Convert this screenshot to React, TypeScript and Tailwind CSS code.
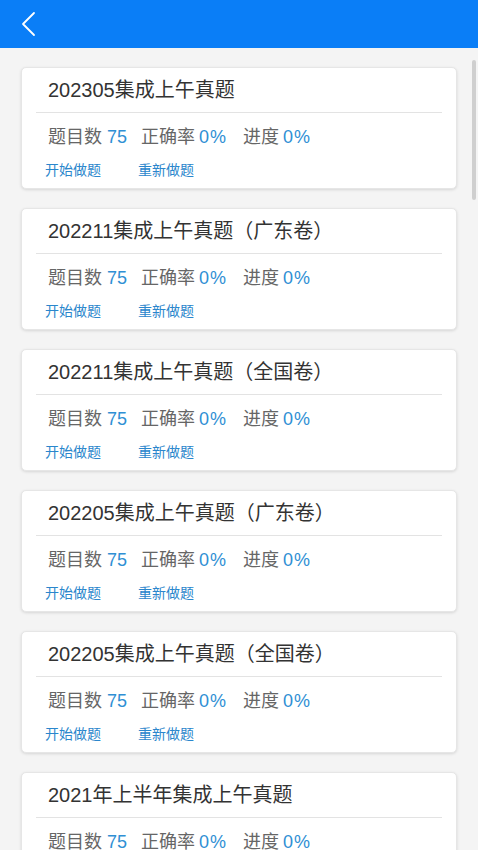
import React from "react";

const papers = [
  "202305集成上午真题",
  "202211集成上午真题（广东卷）",
  "202211集成上午真题（全国卷）",
  "202205集成上午真题（广东卷）",
  "202205集成上午真题（全国卷）",
  "2021年上半年集成上午真题",
];

function PaperCard({ title }: { title: string }) {
  return (
    <div className="bg-white rounded-[5px] border border-[#e6e6e6] shadow-[0_1px_3px_rgba(0,0,0,0.12)] pt-[10px] pb-[9px]">
      <div className="px-[26px] text-[20px] leading-[24px] text-[#333333]">{title}</div>
      <div className="mx-[14px] mt-[10px] h-px bg-[#e3e3e3]" />
      <div className="mt-[12px] px-[26px] flex items-center text-[18px] leading-[24px]">
        <span className="text-[#666666]">题目数</span>
        <span className="ml-[5px] text-[#2f8fd4]">75</span>
        <span className="ml-[14px] text-[#666666]">正确率</span>
        <span className="ml-[4px] text-[#2f8fd4] tracking-[1px]">0%</span>
        <span className="ml-[16px] text-[#666666]">进度</span>
        <span className="ml-[4px] text-[#2f8fd4] tracking-[1px]">0%</span>
      </div>
      <div className="mt-[12px] px-[23px] flex items-center text-[14px] leading-[18px] text-[#2a86cc]">
        <button type="button">开始做题</button>
        <button type="button" className="ml-[37px]">重新做题</button>
      </div>
    </div>
  );
}

export default function App() {
  return (
    <div
      className="min-h-screen bg-[#f4f4f4]"
      style={{ fontFamily: '"Liberation Sans", "Noto Sans CJK SC", sans-serif' }}
    >
      {/* Top bar */}
      <div className="h-[48px] bg-[#0a7ef7] flex items-center pl-[20px]">
        <svg width="18" height="26" viewBox="0 0 18 26" fill="none">
          <polyline
            points="14,2 3,13 14,24"
            stroke="white"
            strokeWidth="1.8"
            strokeLinecap="round"
            strokeLinejoin="round"
          />
        </svg>
      </div>

      {/* List */}
      <div className="px-[21px] pt-[19px] pb-[19px] flex flex-col gap-[19px]">
        {papers.map((p) => (
          <PaperCard key={p} title={p} />
        ))}
      </div>

      {/* Overlay scrollbar */}
      <div className="fixed right-[2px] top-[60px] w-[4px] h-[140px] rounded-full bg-[#cfcfcf]" />
    </div>
  );
}
